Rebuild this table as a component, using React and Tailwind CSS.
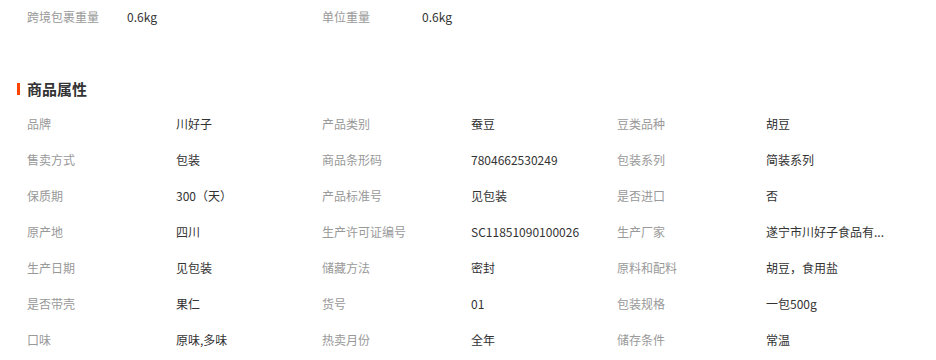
const topRows = [
  ["跨境包裹重量", "0.6kg"],
  ["单位重量", "0.6kg"],
];

const attrs = [
  ["品牌", "川好子"],
  ["产品类别", "蚕豆"],
  ["豆类品种", "胡豆"],
  ["售卖方式", "包装"],
  ["商品条形码", "7804662530249"],
  ["包装系列", "简装系列"],
  ["保质期", "300（天）"],
  ["产品标准号", "见包装"],
  ["是否进口", "否"],
  ["原产地", "四川"],
  ["生产许可证编号", "SC11851090100026"],
  ["生产厂家", "遂宁市川好子食品有..."],
  ["生产日期", "见包装"],
  ["储藏方法", "密封"],
  ["原料和配料", "胡豆，食用盐"],
  ["是否带壳", "果仁"],
  ["货号", "01"],
  ["包装规格", "一包500g"],
  ["口味", "原味,多味"],
  ["热卖月份", "全年"],
  ["储存条件", "常温"],
];

export default function App() {
  return (
    <div
      className="w-[936px] h-[360px] overflow-hidden bg-white text-[12px] text-[#333]"
      style={{ fontFamily: '"Noto Sans CJK SC", "Liberation Sans", sans-serif' }}
    >
      <div className="flex h-[34px] items-center pl-[27px]">
        {topRows.map(([k, v]) => (
          <div key={k} className="flex w-[295px] items-center">
            <span className="w-[100px] text-[#999]">{k}</span>
            <span>{v}</span>
          </div>
        ))}
      </div>

      <div className="mt-[45px] flex h-[20px] items-center pl-[17px]">
        <span className="mr-[7px] h-[12px] w-[3px] bg-[#ff4400]" />
        <span className="text-[15px] font-bold text-[#333]">商品属性</span>
      </div>

      <div className="mt-[7px] grid w-[912px] grid-cols-3 pl-[27px]">
        {attrs.map(([k, v]) => (
          <div key={k} className="flex h-[36px] items-center">
            <span className="w-[149px] shrink-0 text-[#999]">{k}</span>
            <span className="whitespace-nowrap text-[#333]">{v}</span>
          </div>
        ))}
      </div>
    </div>
  );
}
